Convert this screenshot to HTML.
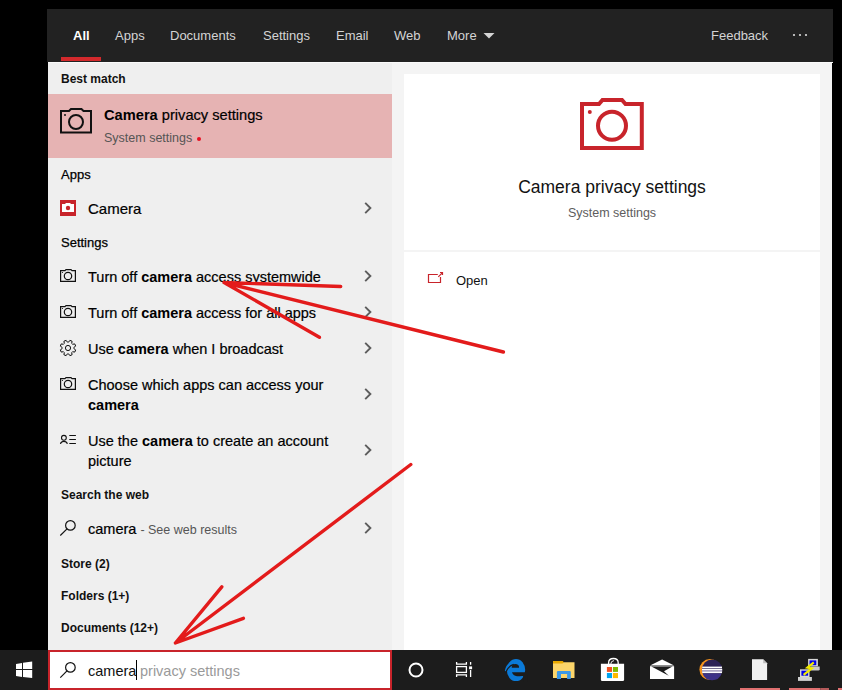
<!DOCTYPE html>
<html><head><meta charset="utf-8">
<style>
*{margin:0;padding:0;box-sizing:border-box}
html,body{width:842px;height:690px;overflow:hidden;background:#000;font-family:"Liberation Sans",sans-serif}
.a{position:absolute;white-space:nowrap;line-height:1}
#hdr{position:absolute;left:47px;top:9px;width:786px;height:53px;background:#222}
.tab{top:29px;font-size:13px;color:#d4d4d4}
#left{position:absolute;left:48px;top:62px;width:344px;height:588px;background:#efefef}
#right{position:absolute;left:392px;top:62px;width:440px;height:588px;background:#f4f4f4}
.card{position:absolute;background:#fff}
.hd{left:61px;font-size:12px;font-weight:bold;color:#111}
.row{left:88px;font-size:14.5px;color:#000;-webkit-text-stroke:0.2px #000}
.row b{font-weight:bold;-webkit-text-stroke:0}
#task{position:absolute;left:0;top:650px;width:842px;height:40px;background:#1c1c1c}
svg{position:absolute;left:0;top:0;overflow:visible}
</style></head><body>
<div id="hdr"></div>
<div class="tab a" style="left:73px;color:#fff;font-weight:bold">All</div>
<div class="a" style="left:61px;top:57px;width:40px;height:4px;background:#d3292c"></div>
<div class="tab a" style="left:115px">Apps</div>
<div class="tab a" style="left:170px">Documents</div>
<div class="tab a" style="left:263px">Settings</div>
<div class="tab a" style="left:336px">Email</div>
<div class="tab a" style="left:394px">Web</div>
<div class="tab a" style="left:447px">More</div>
<div class="tab a" style="left:711px">Feedback</div>
<svg width="842" height="690" style="z-index:2">
  <polygon points="483.5,33 494.5,33 489,38.5" fill="#d4d4d4"/>
  <circle cx="794" cy="35" r="1.1" fill="#ddd"/><circle cx="800" cy="35" r="1.1" fill="#ddd"/><circle cx="806" cy="35" r="1.1" fill="#ddd"/>
</svg>

<div id="left"></div>
<div id="right"></div>
<div class="a" style="left:48px;top:62px;width:785px;height:1px;background:#fafafa"></div>
<div class="card" style="left:404px;top:74px;width:416px;height:176px"></div>
<div class="card" style="left:404px;top:252px;width:416px;height:398px"></div>

<!-- left column -->
<div class="hd a" style="top:73px">Best match</div>
<div class="a" style="left:48px;top:94px;width:344px;height:64px;background:#e6b3b3"></div>
<div class="row a" style="left:104px;top:108px;font-size:14.65px"><b>Camera</b> privacy settings</div>
<div class="a" style="left:104px;top:132px;font-size:12.5px;color:#555">System settings</div>
<div class="a" style="left:197px;top:137px;width:4px;height:4px;border-radius:2px;background:#e81123"></div>

<div class="hd a" style="top:168px;font-weight:normal;font-size:13px;color:#000;-webkit-text-stroke:0.25px #000">Apps</div>
<div class="a" style="left:60px;top:200px;width:16px;height:16px;background:#c8242b"></div>
<div class="row a" style="top:201px;font-size:15px">Camera</div>

<div class="hd a" style="top:236px;font-weight:normal;font-size:13px;color:#000;-webkit-text-stroke:0.25px #000">Settings</div>
<div class="row a" style="top:270px">Turn off <b>camera</b> access systemwide</div>
<div class="row a" style="top:306px">Turn off <b>camera</b> access for all apps</div>
<div class="row a" style="top:342px">Use <b>camera</b> when I broadcast</div>
<div class="row a" style="top:378px">Choose which apps can access your</div>
<div class="row a" style="top:398px"><b>camera</b></div>
<div class="row a" style="top:434px">Use the <b>camera</b> to create an account</div>
<div class="row a" style="top:454px">picture</div>

<div class="hd a" style="top:489px">Search the web</div>
<div class="row a" style="top:522px">camera <span style="font-size:12.5px;color:#555;-webkit-text-stroke:0">- See web results</span></div>
<div class="hd a" style="top:558px">Store (2)</div>
<div class="hd a" style="top:590px">Folders (1+)</div>
<div class="hd a" style="top:622px">Documents (12+)</div>

<!-- right pane -->
<div class="a" style="left:404px;width:416px;top:179px;text-align:center;font-size:17.5px;color:#111">Camera privacy settings</div>
<div class="a" style="left:404px;width:416px;top:207px;text-align:center;font-size:12.5px;color:#5d5d5d">System settings</div>
<div class="a" style="left:456px;top:274px;font-size:13px;color:#111">Open</div>

<!-- taskbar -->
<div id="task"></div>
<div class="a" style="left:48px;top:650px;width:344px;height:40px;background:#fff;border:2px solid #c8242b"></div>
<div class="a" style="left:88px;top:664px;font-size:14.5px;color:#111">camera</div>
<div class="a" style="left:136px;top:660px;width:1.2px;height:20px;background:#000"></div>
<div class="a" style="left:140px;top:664px;font-size:14.5px;color:#9a9a9a">privacy settings</div>

<svg width="842" height="690" style="z-index:3">
  <!-- best match camera icon -->
  <g fill="none" stroke="#111" stroke-width="2">
    <path d="M61,111 H69 L71,109 H81.5 L83.5,111 H91 V132.5 H61 Z"/>
    <circle cx="76" cy="122" r="7"/>
  </g>
  <circle cx="65" cy="115" r="1" fill="#111"/>
  <!-- camera app white camera -->
  <path d="M62,204 H65 L66,203 H70 L71,204 H74 V212 H62 Z" fill="#fff"/>
  <circle cx="68" cy="208" r="2.2" fill="#c8242b"/>
  <!-- small camera icons -->
  <g fill="none" stroke="#111" stroke-width="1.2">
    <path d="M60.6,270.6 H65 L66,269.6 H71 L72,270.6 H75.4 V281.4 H60.6 Z"/>
    <circle cx="68" cy="276" r="3.7"/>
    <path d="M60.6,306.6 H65 L66,305.6 H71 L72,306.6 H75.4 V317.4 H60.6 Z"/>
    <circle cx="68" cy="312" r="3.7"/>
    <path d="M60.6,378.6 H65 L66,377.6 H71 L72,378.6 H75.4 V389.4 H60.6 Z"/>
    <circle cx="68" cy="384" r="3.7"/>
  </g>
  <circle cx="62.5" cy="272.5" r="0.6" fill="#111"/>
  <circle cx="62.5" cy="308.5" r="0.6" fill="#111"/>
  <circle cx="62.5" cy="380.5" r="0.6" fill="#111"/>
  <!-- gear -->
  <g transform="translate(68,348)" fill="none" stroke="#111" stroke-width="1">
    <path d="M5.90,0.12L5.87,0.60L7.67,1.90L6.76,4.08L4.58,3.72L4.25,4.09L4.09,4.25L3.72,4.58L4.08,6.76L1.90,7.67L0.60,5.87L0.12,5.90L-0.12,5.90L-0.60,5.87L-1.90,7.67L-4.08,6.76L-3.72,4.58L-4.09,4.25L-4.25,4.09L-4.58,3.72L-6.76,4.08L-7.67,1.90L-5.87,0.60L-5.90,0.12L-5.90,-0.12L-5.87,-0.60L-7.67,-1.90L-6.76,-4.08L-4.58,-3.72L-4.25,-4.09L-4.09,-4.25L-3.72,-4.58L-4.08,-6.76L-1.90,-7.67L-0.60,-5.87L-0.12,-5.90L0.12,-5.90L0.60,-5.87L1.90,-7.67L4.08,-6.76L3.72,-4.58L4.09,-4.25L4.25,-4.09L4.58,-3.72L6.76,-4.08L7.67,-1.90L5.87,-0.60L5.90,-0.12Z"/>
    <circle r="2.6"/>
  </g>
  <!-- account -->
  <g fill="none" stroke="#111" stroke-width="1.1">
    <circle cx="63.9" cy="437.8" r="2.4"/>
    <path d="M60.4,443.9 A3.7,3.7 0 0 1 67.4,443.9"/>
    <path d="M69.3,435.5 H75.9 M69.3,439.5 H75.9 M69.3,443.5 H75.9"/>
  </g>
  <!-- search web icon -->
  <g fill="none" stroke="#111" stroke-width="1.2">
    <circle cx="70.4" cy="525.4" r="4.8"/>
    <path d="M60.3,535.5 L67,528.9"/>
  </g>
  <!-- chevrons -->
  <g fill="none" stroke="#5c5c5c" stroke-width="1.9">
    <path d="M365.2,202.8 L370.4,208 L365.2,213.2"/>
    <path d="M365.2,270.8 L370.4,276 L365.2,281.2"/>
    <path d="M365.2,306.8 L370.4,312 L365.2,317.2"/>
    <path d="M365.2,342.8 L370.4,348 L365.2,353.2"/>
    <path d="M365.2,388.8 L370.4,394 L365.2,399.2"/>
    <path d="M365.2,444.8 L370.4,450 L365.2,455.2"/>
    <path d="M365.2,522.8 L370.4,528 L365.2,533.2"/>
  </g>
  <!-- large camera -->
  <g fill="none" stroke="#c8242b" stroke-width="4">
    <path d="M582,104 H599 L602.5,100 H622 L625.5,104 H641.8 V148 H582 Z"/>
    <circle cx="612" cy="125.8" r="14"/>
  </g>
  <circle cx="589.8" cy="111.9" r="2" fill="#c8242b"/>
  <!-- open icon -->
  <g fill="none" stroke="#c8242b" stroke-width="1.2">
    <path d="M437.8,274.5 H428.5 V282.5 H440.5 V277"/>
    <path d="M438.3,276.9 L442.5,272.7 M440,272.5 H442.5 V275"/>
  </g>
  <!-- search box icon -->
  <g fill="none" stroke="#111" stroke-width="1.2">
    <circle cx="70.4" cy="667.4" r="4.8"/>
    <path d="M60.3,677.6 L67,670.9"/>
  </g>
  <!-- windows logo -->
  <g fill="#fff">
    <path d="M16,664 L22,662.9 V669 H16 Z"/>
    <path d="M23,662.8 L32.2,661.6 V669 H23 Z"/>
    <path d="M16,670 H22 V677 L16,675.9 Z"/>
    <path d="M23,670 H32.2 V678 L23,677.1 Z"/>
  </g>
  <!-- arrows -->
  <g fill="none" stroke="#e31b1b" stroke-width="3.4" stroke-linecap="round">
    <path d="M340.7,286.5 L224,282.5 L319.4,337.3 M224,282.5 L503.4,352"/>
    <path d="M410.8,464.5 L175.4,643 L221.8,586.8 M175.4,643 L243.4,618.3"/>
  </g>
</svg>

<svg width="842" height="690" style="z-index:4">
  <!-- cortana -->
  <circle cx="416" cy="670" r="6.5" fill="none" stroke="#fff" stroke-width="2"/>
  <!-- task view -->
  <g fill="none" stroke="#fff" stroke-width="1.3">
    <path d="M456.6,662 V664.2 H466.4 V662"/>
    <rect x="456.6" y="666.6" width="9.8" height="5.8"/>
    <path d="M456.6,677 V674.8 H466.4 V677"/>
    <path d="M470.6,662 V664.8 M470.6,670 V677"/>
  </g>
  <rect x="469.1" y="666.4" width="3" height="2.8" fill="#fff"/>
  <!-- edge -->
  <g>
    <ellipse cx="516" cy="670.1" rx="9.2" ry="11" fill="#0b7ad8"/>
    <path d="M504.8,671 Q506,662.5 515,660 L516,664 Q509.5,664.5 505.6,671.5 Z" fill="#0b7ad8"/>
    <path d="M505.6,672.4 Q508.4,665.8 513.8,664.3" fill="none" stroke="#1c1c1c" stroke-width="1.3"/>
    <path d="M511.7,667.7 Q511.7,664.1 515.4,664.1 Q519.1,664.1 519.1,667.7 Z" fill="#1c1c1c"/>
    <path d="M512,672.2 H526 V675.6 Q521,676.6 517,676.2 Q513,675.6 512,672.2 Z" fill="#1c1c1c"/>
    <rect x="523.2" y="675" width="4" height="7" fill="#1c1c1c"/>
  </g>
  <!-- folder -->
  <path d="M553,661 H562 L563.2,662.3 H574.5 V678 H553 Z" fill="#fcd56a"/>
  <path d="M553,660.9 H562 Q563.5,660.9 563.5,662.2 Q563.5,663.5 562,663.5 H553 Z" fill="#e9a800"/>
  <path d="M556.9,678.9 V672 Q556.9,670.9 558,670.9 H569.7 Q570.8,670.9 570.8,672 V678.9 H567.1 V674.1 H561 V678.9 Z" fill="#3b98e6"/>
  <!-- store -->
  <path d="M600.9,663.7 H624.1 V679.8 Q624.1,681.1 622.8,681.1 H602.2 Q600.9,681.1 600.9,679.8 Z" fill="#fff"/>
  <path d="M608.6,664 V662.8 Q608.6,658.5 613.4,658.5 Q618.2,658.5 618.2,662.8 V664" fill="none" stroke="#fff" stroke-width="1.3"/>
  <path d="M610.8,664 Q610.8,661 614,660.6" fill="none" stroke="#fff" stroke-width="0.9"/>
  <rect x="606.9" y="667" width="5.1" height="4.9" fill="#f25022"/>
  <rect x="612.9" y="667" width="5.1" height="4.9" fill="#7fba00"/>
  <rect x="606.9" y="673" width="5.1" height="5.1" fill="#00a4ef"/>
  <rect x="612.9" y="673" width="5.1" height="5.1" fill="#ffb900"/>
  <!-- mail -->
  <path d="M650,665.4 L662.1,659.6 L674.1,665.4 Z" fill="#fff"/>
  <rect x="650" y="666.2" width="24.1" height="12.8" fill="#fff"/>
  <path d="M651.4,666.4 H672.4 L664,671.2 L668.8,675.8 Z" fill="#1c1c1c"/>
  <!-- eclipse -->
  <circle cx="709.9" cy="669.6" r="10.5" fill="#f7941e"/>
  <circle cx="712.1" cy="669.6" r="10.2" fill="#2c2255"/>
  <path d="M702.5,673.5 H721.7 A10.2,10.2 0 0 1 702.5,673.5 Z" fill="#3d3288"/>
  <rect x="702" y="669.9" width="20.2" height="2.2" fill="#9a93b8"/>
  <rect x="702.2" y="666.6" width="19.8" height="1.6" fill="#fff"/>
  <rect x="702" y="668.8" width="20.2" height="1.4" fill="#fff"/>
  <rect x="702.2" y="671.6" width="19.8" height="1.5" fill="#fff"/>
  <!-- file -->
  <path d="M752,659.3 H763.2 L767.1,663.2 V680 H752 Z" fill="#f0f0f0"/>
  <path d="M763.2,659.3 V663.2 H767.1 Z" fill="#bcbcbc"/>
  <!-- putty -->
  <rect x="808.1" y="658.9" width="9.8" height="7.4" fill="#d8d8d8"/>
  <rect x="809.5" y="660.4" width="6.8" height="4.8" fill="#0000e8"/>
  <path d="M811,666.5 H819.7 V669.2 Q819.7,670.5 818.4,670.5 H811 Z" fill="#c8c8c8"/>
  <rect x="800" y="669.3" width="9.5" height="7.7" fill="#d8d8d8"/>
  <rect x="801.4" y="670.7" width="6.7" height="5" fill="#0000e8"/>
  <rect x="798" y="677" width="13.9" height="3.9" fill="#d0d0d0"/>
  <path d="M813.8,662.4 L807.4,667.6 L811.8,668.4 L803.6,674.8" fill="none" stroke="#f2ea00" stroke-width="2.2" stroke-linejoin="miter"/>
  <!-- active indicators -->
  <rect x="740" y="688" width="40" height="2" fill="#e07070"/>
  <rect x="789" y="688" width="31.5" height="2" fill="#e07070"/>
  <rect x="820.5" y="688" width="8.5" height="2" fill="#b45a5a"/>
  <rect x="838" y="688" width="4" height="2" fill="#e07070"/>
</svg>

</body></html>
